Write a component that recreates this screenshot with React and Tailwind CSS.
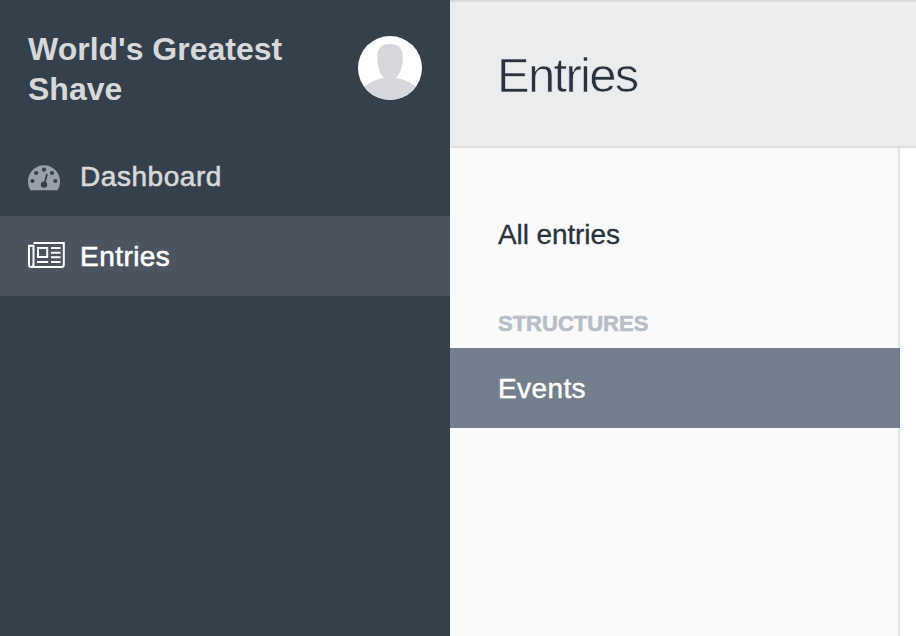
function Avatar() {
  return (
    <svg viewBox="0 0 64 64" className="h-16 w-16 shrink-0 rounded-full bg-white">
      <path
        fill="#d6d8dd"
        d="M32 8C23.500 8 19.500 12.500 19.300 20C19.100 30 21 36 26 42C18 43 12 46.500 6 50.500A32 32 0 0 0 58 50.500C52 46.500 46 43 38 42C43 36 45 30 44.700 20C44.500 12.500 40.500 8 32 8Z"
      />
    </svg>
  );
}

function GaugeIcon() {
  return (
    <svg viewBox="0 0 32 26" className="h-[26px] w-8">
      <path fill="#9a9fa8" d="M2.500 25.300C.8 22.500 0 19.700 0 16.300A16 16 0 0 1 32 16.300C32 19.700 31.200 22.500 29.500 25.300Z" />
      <g fill="#35404b">
        <circle cx="4.500" cy="16" r="2.100" />
        <circle cx="8.200" cy="8" r="2.100" />
        <circle cx="16" cy="4.700" r="2.100" />
        <circle cx="24" cy="8" r="2.100" />
        <circle cx="27.400" cy="16" r="2.100" />
        <circle cx="16" cy="19.600" r="3.200" />
      </g>
      <path d="M16.400 19L18.900 9.500" stroke="#35404b" strokeWidth="1.700" strokeLinecap="round" />
    </svg>
  );
}

function NewsIcon() {
  return (
    <svg viewBox="0 0 37 26" className="h-[26px] w-[37px]" fill="none" stroke="#fff" strokeWidth="2">
      <path d="M5.500 1H35.800V22.800Q35.800 25 33.600 25H3.200Q1 25 1 22.800V3.800H5.500V22.500Q5.500 24.700 3.200 25" />
      <path d="M10 6H19.200V15H10Z" />
      <path d="M23 6H32.500M23 10.700H32.500M23 15.300H32.500M23 20H32.500M9 20H20.200" />
    </svg>
  );
}

export default function App() {
  return (
    <div className="flex h-[636px] w-[916px] overflow-hidden bg-white font-['Liberation_Sans',Arial,sans-serif]">
      <aside className="w-[450px] shrink-0 bg-[#35404b]">
        <div className="flex h-[136px] items-start justify-between px-7 pt-[29px]">
          <h1 className="w-[290px] text-[32px] leading-10 font-bold text-[#d7d8da]">World's Greatest Shave</h1>
          <div className="pt-[7px]">
            <Avatar />
          </div>
        </div>
        <nav className="text-[28px] leading-10">
          <a className="flex h-20 items-center px-7 text-[#d7d8da]">
            <span className="w-[52px] pt-[3px]"><GaugeIcon /></span>
            <span className="pt-[2px] tracking-[0.55px] [-webkit-text-stroke:0.6px_#d7d8da]">Dashboard</span>
          </a>
          <a className="flex h-20 items-center bg-[#4c545f] px-7 text-white">
            <span className="w-[52px] pb-[2px]"><NewsIcon /></span>
            <span className="pt-[2px] tracking-[0.45px] [-webkit-text-stroke:0.6px_#fff]">Entries</span>
          </a>
        </nav>
      </aside>
      <main className="flex min-w-0 flex-1 flex-col">
        <header className="flex h-[148px] shrink-0 items-center border-t-2 border-b-2 border-t-[#d8d9db] border-b-[#dfe0e1] bg-[#ebecee] pt-[2px] pl-[47px]">
          <h2 className="text-[49px] leading-[60px] tracking-[-1.7px] text-[#29323d] [-webkit-text-stroke:0.7px_#ebecee]">Entries</h2>
        </header>
        <div className="w-[450px] flex-1 bg-[linear-gradient(to_right,#fafafa_448px,#e2e3e7_448px)] pt-[46px] text-[28px]">
          <a className="flex h-20 items-center pt-[2px] pl-12 tracking-[-0.1px] text-[#29323d] [-webkit-text-stroke:0.3px_#29323d]">All entries</a>
          <h3 className="h-[74px] pt-[34px] pl-12 text-[22px] leading-[32px] font-bold text-[#b9bec6] [-webkit-text-stroke:0.6px_#b9bec6]">STRUCTURES</h3>
          <a className="flex h-20 items-center bg-[#757f8b] pt-[2px] pl-12 tracking-[0.4px] text-white [-webkit-text-stroke:0.5px_#fff]">Events</a>
        </div>
      </main>
    </div>
  );
}
